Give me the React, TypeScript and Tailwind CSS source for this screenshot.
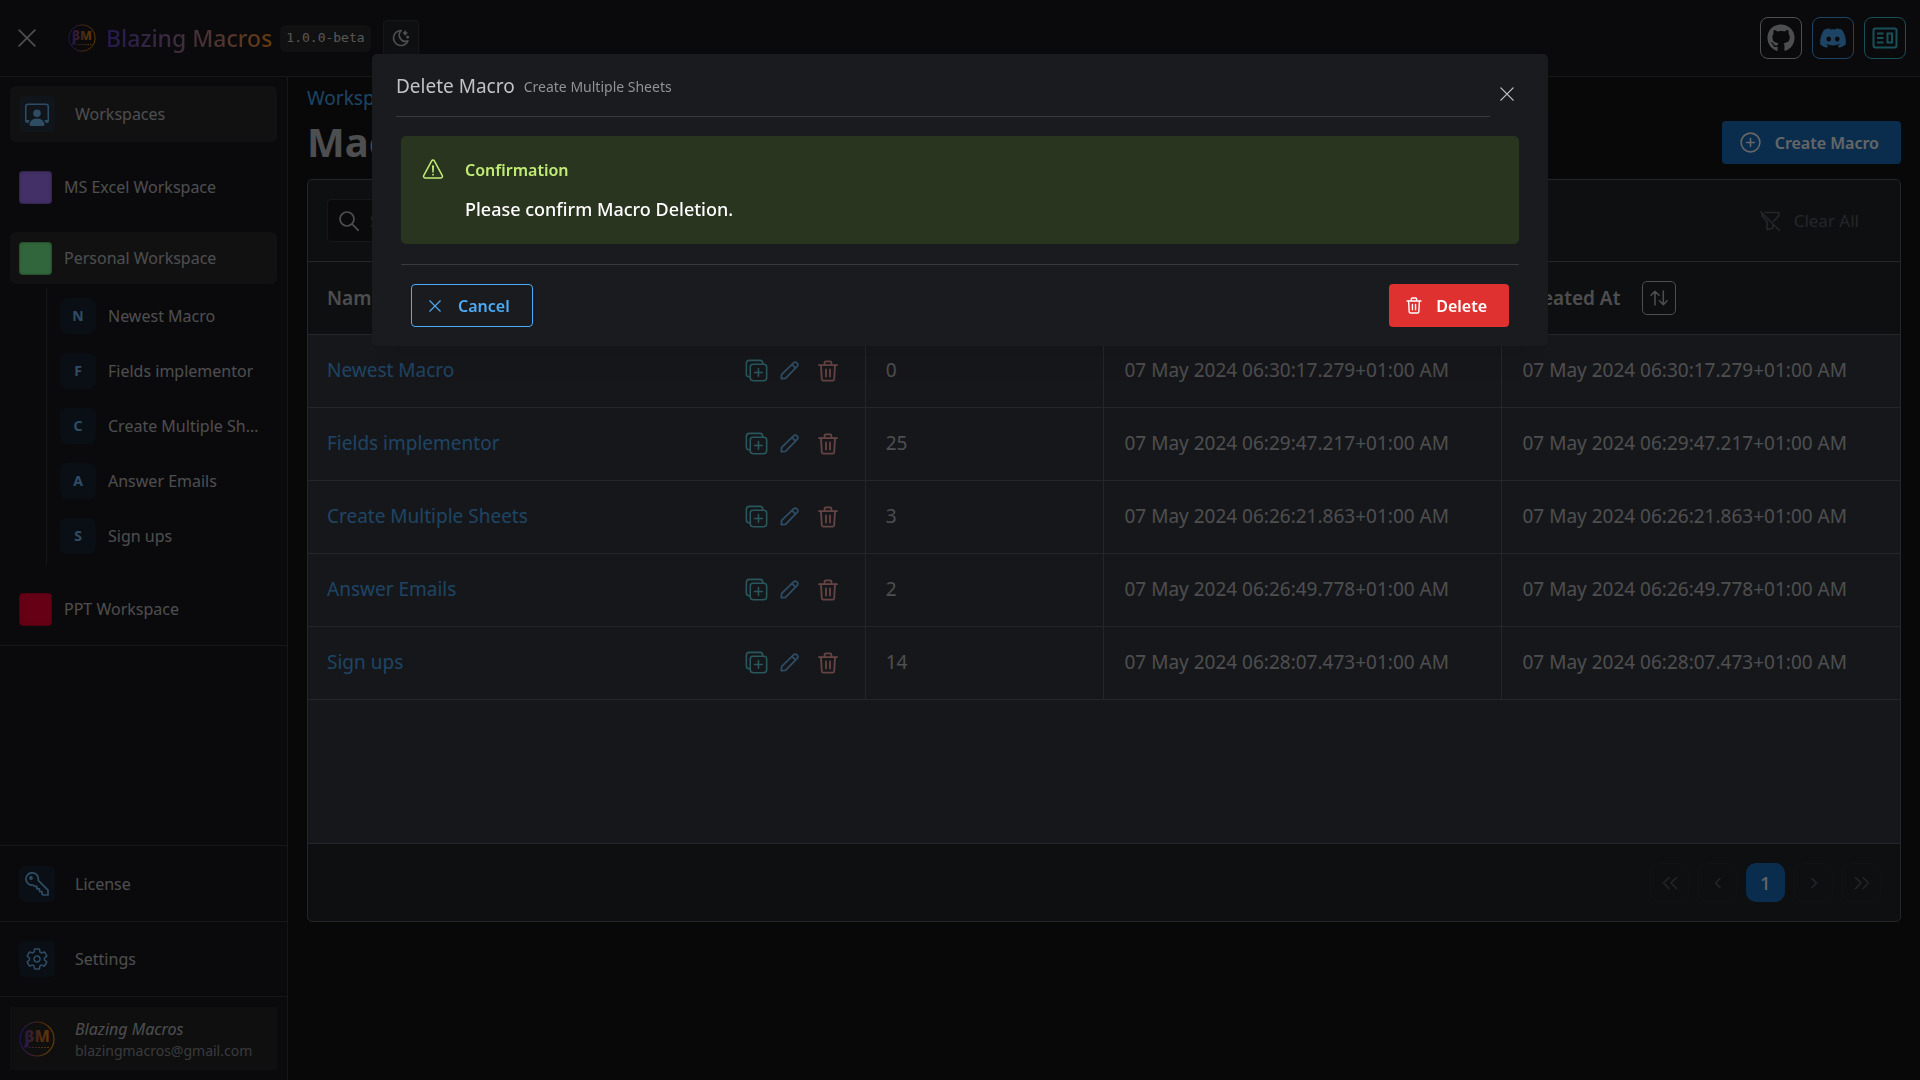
import type { ReactNode } from "react";
import { BsPersonWorkspace } from "react-icons/bs";
import { FaDiscord, FaGithub } from "react-icons/fa";
import {
  IoAddCircleOutline,
  IoDuplicateOutline,
  IoSettingsOutline,
  IoWarningOutline,
} from "react-icons/io5";
import { TbMoonStars } from "react-icons/tb";

const macros = [
  { name: "Newest Macro", actions: 0, date: "07 May 2024 06:30:17.279+01:00 AM" },
  { name: "Fields implementor", actions: 25, date: "07 May 2024 06:29:47.217+01:00 AM" },
  { name: "Create Multiple Sheets", actions: 3, date: "07 May 2024 06:26:21.863+01:00 AM" },
  { name: "Answer Emails", actions: 2, date: "07 May 2024 06:26:49.778+01:00 AM" },
  { name: "Sign ups", actions: 14, date: "07 May 2024 06:28:07.473+01:00 AM" },
];

function CloseIcon({ className }: { className: string }) {
  return (
    <svg viewBox="0 0 16 16" className={className} fill="none" stroke="currentColor" aria-hidden="true">
      <path d="M1 1l14 14M15 1L1 15" strokeWidth="1.5" strokeLinecap="round" />
    </svg>
  );
}

function TrashIcon({ className }: { className: string }) {
  return (
    <svg
      viewBox="0 0 20 22"
      className={className}
      fill="none"
      stroke="currentColor"
      strokeWidth="1.8"
      strokeLinecap="round"
      strokeLinejoin="round"
      aria-hidden="true"
    >
      <path d="M1 5.2h18M6.6 5V2.6a1.3 1.3 0 0 1 1.3-1.3h4.2a1.3 1.3 0 0 1 1.3 1.3V5" />
      <path d="M3 5.4l.8 13.8a1.6 1.6 0 0 0 1.6 1.5h9.2a1.6 1.6 0 0 0 1.6-1.5L17 5.4" />
      <path d="M8 9.5v7M12 9.5v7" />
    </svg>
  );
}

function PencilIcon({ className }: { className: string }) {
  return (
    <svg
      viewBox="0 0 20 20"
      className={className}
      fill="none"
      stroke="currentColor"
      strokeWidth="1.8"
      strokeLinejoin="round"
      aria-hidden="true"
    >
      <path d="M1.3 18.7l.5-4.6L14.3 1.9a2.4 2.4 0 0 1 3.4 0l.4.4a2.4 2.4 0 0 1 0 3.4L5.8 18.2z" />
      <path d="M12.6 3.6l3.8 3.8" />
    </svg>
  );
}

function SearchIcon() {
  return (
    <svg viewBox="0 0 20 20" className="size-5" fill="none" stroke="currentColor" strokeWidth="1.7" aria-hidden="true">
      <circle cx="8" cy="8" r="7" />
      <path d="M13 13l6.300 6.300" strokeLinecap="round" />
    </svg>
  );
}

function FilterSlashIcon() {
  return (
    <svg
      viewBox="0 0 20 20"
      className="size-5"
      fill="none"
      stroke="currentColor"
      strokeWidth="1.6"
      strokeLinejoin="round"
      strokeLinecap="round"
      aria-hidden="true"
    >
      <path d="M.8.8l18.4 18.4M5 1.5h13.800v3.200l-5.200 5.600M2 2.200v2.500l5 5.800v8.300l5.800-1.800v-4" />
    </svg>
  );
}

function KeyIcon() {
  return (
    <svg
      viewBox="0 0 24 24"
      className="size-6"
      fill="none"
      stroke="currentColor"
      strokeWidth="1.7"
      strokeLinejoin="round"
      aria-hidden="true"
    >
      <path d="M13.200 8.300L23 18.200V23h-4.800l-1.200-1.200v-2.300h-2.500v-2.600h-2.600v-2.500h-2.200l-1.400-1.300A6.200 6.200 0 1 1 13.200 8.300z" />
      <circle cx="6" cy="6" r="1.900" fill="currentColor" stroke="none" />
    </svg>
  );
}

function NewsIcon() {
  return (
    <svg viewBox="0 0 26 22" className="h-[22px] w-[26px]" fill="none" stroke="currentColor" strokeWidth="2" aria-hidden="true">
      <rect x="1.5" y="1.5" width="23" height="19" rx="2" />
      <path d="M5 6.500h6.500M5 11h6.500M5 15.500h6.500" />
      <rect x="15.500" y="6.500" width="4.500" height="9" />
    </svg>
  );
}

function SortIcon() {
  return (
    <svg
      viewBox="0 0 18 16"
      className="h-4 w-[18px]"
      fill="none"
      stroke="currentColor"
      strokeWidth="1.5"
      strokeLinecap="round"
      strokeLinejoin="round"
      aria-hidden="true"
    >
      <path d="M5 15V1.500M1 5.200l4-4 4 4M13.300 1v13.500M9.500 10.800l3.800 4 3.800-4" />
    </svg>
  );
}

function ChevronIcon({ double, flip }: { double?: boolean; flip?: boolean }) {
  return (
    <svg
      viewBox="0 0 16 14"
      className={flip ? "h-[14px] w-4 rotate-180" : "h-[14px] w-4"}
      fill="none"
      stroke="currentColor"
      strokeWidth="1.5"
      strokeLinecap="round"
      strokeLinejoin="round"
      aria-hidden="true"
    >
      {double ? <path d="M7 1.500L1.500 7 7 12.500M14.500 1.500L9 7l5.500 5.500" /> : <path d="M10 2.500L5.500 7l4.500 4.500" />}
    </svg>
  );
}

function Logo({ id, className }: { id: string; className: string }) {
  return (
    <svg viewBox="0 0 36 36" className={className} aria-hidden="true">
      <defs>
        <linearGradient id={id} x1="0" x2="36" y1="0" y2="0" gradientUnits="userSpaceOnUse">
          <stop offset="0.1" stopColor="#5b35c8" />
          <stop offset="0.5" stopColor="#b0603c" />
          <stop offset="0.9" stopColor="#f59200" />
        </linearGradient>
      </defs>
      <circle cx="18" cy="18" r="17" fill="none" stroke={`url(#${id})`} strokeWidth="1.2" />
      <path d="M4 27l6-9-1 8z" fill={`url(#${id})`} />
      <text
        x="18"
        y="21"
        textAnchor="middle"
        fontFamily="Noto Sans, sans-serif"
        fontSize="16"
        fontWeight="800"
        fill={`url(#${id})`}
      >
        βM
      </text>
      <path d="M10 26.500h20" stroke={`url(#${id})`} strokeWidth="1.2" strokeDasharray="2 1" />
    </svg>
  );
}

function IconTile({ children }: { children: ReactNode }) {
  return (
    <span className="flex size-9 shrink-0 items-center justify-center rounded-md bg-[#1971c2]/15 text-[#74c0fc]">
      {children}
    </span>
  );
}

function WorkspaceLink({ name, swatch, active }: { name: string; swatch: string; active?: boolean }) {
  return (
    <a
      href="#"
      className={`flex h-[52px] items-center gap-3 rounded-md px-[9px] ${active ? "bg-[#2b2b2e]" : ""}`}
    >
      <span className={`size-[33px] rounded-[4px] shadow-[inset_0_0_0_1px_rgba(0,0,0,0.15),inset_0_0_4px_rgba(0,0,0,0.2)] ${swatch}`} />
      {name}
    </a>
  );
}

function Header() {
  return (
    <header className="flex h-[77px] shrink-0 items-center border-b border-[#373a40] bg-[#1a1b1e] pr-[14px] pl-[18px]">
      <button type="button" aria-label="Close menu" className="flex size-[18px] items-center justify-center text-[#c1c2c5]">
        <CloseIcon className="size-[18px]" />
      </button>
      <Logo id="logo-header" className="ml-8 size-7" />
      <span className="ml-[10px] bg-linear-to-r from-[#5f3dc4] to-[#ff9500] bg-clip-text text-[23px] font-medium whitespace-nowrap text-transparent">
        Blazing Macros
      </span>
      <code className="ml-2 flex h-[27px] items-center rounded-md bg-[#2b2b2e] px-[6px] font-['DejaVu_Sans_Mono','Liberation_Mono',monospace] text-[13px] text-[#d8d8da]">
        1.0.0-beta
      </code>
      <button
        type="button"
        aria-label="Toggle color scheme"
        className="ml-3 flex size-9 items-center justify-center rounded-[4px] border border-[#373a40] bg-[#25262b] text-[#c1c2c5]"
      >
        <TbMoonStars size={20} />
      </button>
      <div className="ml-auto flex gap-[10px]">
        <a href="#" aria-label="GitHub" className="flex size-[42px] items-center justify-center rounded-lg border border-[#c1c2c5] text-[#c1c2c5]">
          <FaGithub size={28} />
        </a>
        <a href="#" aria-label="Discord" className="flex size-[42px] items-center justify-center rounded-lg border border-[#4dabf7] text-[#4dabf7]">
          <FaDiscord size={28} />
        </a>
        <a href="#" aria-label="News" className="flex size-[42px] items-center justify-center rounded-lg border border-[#3bc9db] text-[#3bc9db]">
          <NewsIcon />
        </a>
      </div>
    </header>
  );
}

function Sidebar() {
  return (
    <aside className="flex w-72 shrink-0 flex-col border-r border-[#373a40] bg-[#1a1b1e] text-base text-[#c1c2c5]">
      <nav className="flex flex-col gap-[19px] border-b border-[#373a40] px-[10px] pt-[9px] pb-[10px]">
        <a href="#" className="flex h-14 items-center gap-5 rounded-md bg-[#2b2b2e] px-[9px]">
          <IconTile>
            <BsPersonWorkspace size={24} />
          </IconTile>
          Workspaces
        </a>
        <WorkspaceLink name="MS Excel Workspace" swatch="bg-[#a878ff]" />
        <div>
          <WorkspaceLink name="Personal Workspace" swatch="bg-[#7bff96]" active />
          <ul className="mt-1 ml-9 border-l border-[#373a40] pb-px">
            {macros.map((macro) => (
              <li key={macro.name}>
                <a href="#" className="flex h-[55px] items-center gap-3 pr-[10px] pl-[13px]">
                  <span className="flex size-9 shrink-0 items-center justify-center rounded-lg bg-[#1971c2]/15 text-sm font-bold text-[#74c0fc]">
                    {macro.name[0]}
                  </span>
                  <span className="truncate">{macro.name}</span>
                </a>
              </li>
            ))}
          </ul>
        </div>
        <WorkspaceLink name="PPT Workspace" swatch="bg-[#ff0033]" />
      </nav>
      <div className="mt-auto">
        <a href="#" className="flex h-[76px] items-center gap-5 border-t border-[#373a40] px-[19px]">
          <IconTile>
            <KeyIcon />
          </IconTile>
          License
        </a>
        <a href="#" className="flex h-[76px] items-center gap-5 border-y border-[#373a40] px-[19px]">
          <IconTile>
            <IoSettingsOutline size={24} />
          </IconTile>
          Settings
        </a>
        <div className="p-[10px]">
          <a href="#" className="flex h-[63px] items-center gap-5 bg-[#262628] px-[9px]">
            <Logo id="logo-user" className="size-9" />
            <span className="flex flex-col">
              <span className="leading-6 italic">Blazing Macros</span>
              <span className="text-sm leading-5 text-[#909296]">blazingmacros@gmail.com</span>
            </span>
          </a>
        </div>
      </div>
    </aside>
  );
}

function SortableHeader({ label }: { label: string }) {
  return (
    <th scope="col" className="px-5 text-left font-semibold first:pl-[19px]">
      <span className="flex items-center gap-[22px]">
        {label}
        <button
          type="button"
          aria-label={`Sort by ${label}`}
          className="flex size-[34px] items-center justify-center rounded-[5px] border border-[#c1c2c5]"
        >
          <SortIcon />
        </button>
      </span>
    </th>
  );
}

function MacrosTable() {
  return (
    <table className="w-full table-fixed border-collapse text-[19px] text-[#c1c2c5]">
      <colgroup>
        <col className="w-[35%]" />
        <col className="w-[15%]" />
        <col className="w-[25%]" />
        <col className="w-[25%]" />
      </colgroup>
      <thead>
        <tr className="h-[72px] border-b border-[#5c5f66] bg-[#25262b]">
          <SortableHeader label="Name" />
          <SortableHeader label="Actions" />
          <SortableHeader label="Updated At" />
          <SortableHeader label="Created At" />
        </tr>
      </thead>
      <tbody>
        {macros.map((macro) => (
          <tr key={macro.name} className="h-[73px] border-b border-[#5c5f66]">
            <td className="border-r border-[#5c5f66] pr-[17px] pl-[19px]">
              <div className="flex items-center">
                <a href="#" className="mr-auto text-[#4dabf7]">
                  {macro.name}
                </a>
                <button type="button" aria-label={`Duplicate ${macro.name}`} className="flex w-[26px] justify-center text-[#66d9e8]">
                  <IoDuplicateOutline size={25} />
                </button>
                <button type="button" aria-label={`Edit ${macro.name}`} className="flex w-[39px] justify-center text-[#74c0fc]">
                  <PencilIcon className="size-[19px]" />
                </button>
                <button type="button" aria-label={`Delete ${macro.name}`} className="flex w-[39px] justify-center text-[#ffa8a8]">
                  <TrashIcon className="h-[22px] w-5" />
                </button>
              </div>
            </td>
            <td className="border-r border-[#5c5f66] px-5">{macro.actions}</td>
            <td className="border-r border-[#5c5f66] px-5 whitespace-nowrap">{macro.date}</td>
            <td className="px-5 whitespace-nowrap">{macro.date}</td>
          </tr>
        ))}
      </tbody>
    </table>
  );
}

function Paginator() {
  const item = "flex size-[39px] items-center justify-center rounded-[10px] border border-[#2c2e33] text-[#5c5f66]";
  return (
    <div className="flex h-[78px] items-center justify-end gap-[9px] border-t border-[#5c5f66] px-[19px]">
      <button type="button" aria-label="First page" className={item}>
        <ChevronIcon double />
      </button>
      <button type="button" aria-label="Previous page" className={item}>
        <ChevronIcon />
      </button>
      <button type="button" className="size-[39px] rounded-[10px] bg-[#1971c2] text-lg font-medium text-white">
        1
      </button>
      <button type="button" aria-label="Next page" className={item}>
        <ChevronIcon flip />
      </button>
      <button type="button" aria-label="Last page" className={item}>
        <ChevronIcon double flip />
      </button>
    </div>
  );
}

function MacrosPage() {
  return (
    <main className="min-w-0 flex-1 px-[19px] pt-[7px]">
      <a href="#" className="block text-[19px] leading-7 text-[#4dabf7]">
        Workspaces
      </a>
      <div className="flex h-[67px] items-start justify-between">
        <h1 className="text-[40px] leading-[60px] font-bold text-[#c1c2c5]">Macros</h1>
        <button
          type="button"
          className="mt-[9px] flex h-[43px] items-center gap-3 rounded-[4px] bg-[#1971c2] px-4 pr-[22px] font-semibold text-white"
        >
          <IoAddCircleOutline size={25} />
          Create Macro
        </button>
      </div>
      <section className="overflow-hidden rounded-[5px] border border-[#5c5f66] bg-[#25262b]">
        <div className="flex h-[82px] items-center justify-between border-b border-[#5c5f66] pr-[41px] pl-[19px]">
          <label className="flex h-[43px] w-80 items-center gap-[11px] rounded-[4px] border border-[#373a40] bg-[#1a1b1e] px-[11px] text-[#c1c2c5]">
            <SearchIcon />
            <input
              type="search"
              aria-label="Search macros"
              placeholder="Search"
              className="min-w-0 flex-1 bg-transparent outline-none placeholder:text-[#5c5f66]"
            />
          </label>
          <button type="button" disabled className="flex items-center gap-[14px] text-[#5c5f66]">
            <FilterSlashIcon />
            <span className="text-[17px]">Clear All</span>
          </button>
        </div>
        <div className="min-h-[581px] bg-[#383a42]">
          <MacrosTable />
        </div>
        <Paginator />
      </section>
    </main>
  );
}

function DeleteMacroModal() {
  return (
    <div className="fixed inset-0 flex items-start justify-center bg-black/60 px-10 pt-[5vh]">
      <div
        role="dialog"
        aria-modal="true"
        aria-labelledby="delete-title"
        className="w-full max-w-[1176px] rounded-[5px] bg-[#1a1b1e] px-6 pt-4 pb-[19px] text-[#c1c2c5] shadow-[0_1px_3px_rgba(0,0,0,0.05),0_36px_28px_-7px_rgba(0,0,0,0.05),0_17px_17px_-7px_rgba(0,0,0,0.04)]"
      >
        <div className="flex items-center">
          <div className="flex h-[47px] flex-1 items-start gap-[9px] border-b border-[#373a40]">
            <h2 id="delete-title" className="text-[19px] leading-[33px]">
              Delete Macro
            </h2>
            <span className="text-sm leading-[33px] text-[#909296]">Create Multiple Sheets</span>
          </div>
          <button type="button" aria-label="Close" className="flex h-8 w-[34px] items-center justify-center">
            <CloseIcon className="size-[14px]" />
          </button>
        </div>
        <div className="mx-[5px] mt-[19px]">
          <div role="alert" className="flex gap-5 rounded-[5px] bg-[#2a3520] px-5 pt-5 pb-[19px]">
            <IoWarningOutline size={24} className="mt-px shrink-0 text-[#c0eb75]" />
            <div>
              <p className="leading-7 font-semibold text-[#c0eb75]">Confirmation</p>
              <p className="mt-[10px] text-lg leading-[31px] font-medium text-white">Please confirm Macro Deletion.</p>
            </div>
          </div>
          <div className="mt-5 flex justify-between border-t border-[#373a40] px-[10px] pt-[19px]">
            <button
              type="button"
              className="flex h-[43px] items-center gap-[17px] rounded-[4px] border border-[#4dabf7] px-[17px] pr-[22px] font-semibold text-[#4dabf7]"
            >
              <CloseIcon className="size-3" />
              Cancel
            </button>
            <button
              type="button"
              className="flex h-[43px] items-center gap-[14px] rounded-[4px] bg-[#e03131] px-[17px] pr-[22px] font-semibold text-white"
            >
              <TrashIcon className="h-[17px] w-4" />
              Delete
            </button>
          </div>
        </div>
      </div>
    </div>
  );
}

export default function App() {
  return (
    <div className="flex min-h-screen flex-col bg-[#141517] font-['Noto_Sans','Open_Sans',sans-serif]">
      <Header />
      <div className="flex flex-1">
        <Sidebar />
        <MacrosPage />
      </div>
      <DeleteMacroModal />
    </div>
  );
}
